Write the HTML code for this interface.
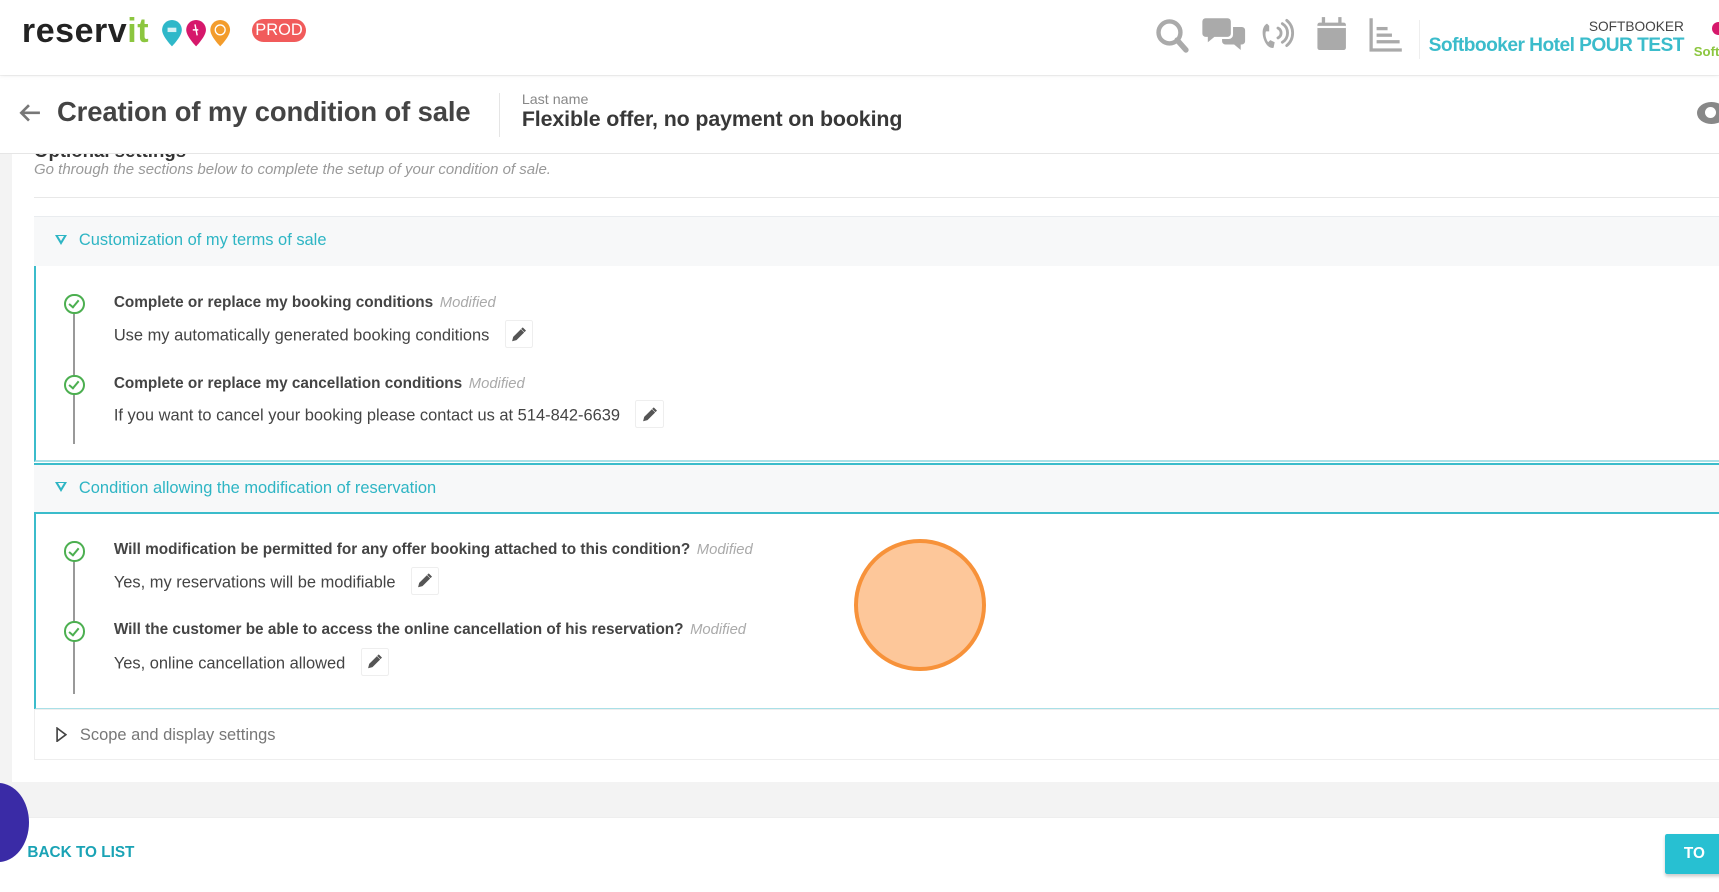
<!DOCTYPE html>
<html><head><meta charset="utf-8"><style>
html,body{margin:0;padding:0;overflow:hidden;background:#f3f3f3}
body{width:1719px;height:892px}
#w{zoom:1.0963;width:1568px;height:814px;position:relative;overflow:hidden;font-family:"Liberation Sans",sans-serif;background:#f3f3f3}
.a{position:absolute}
.hdr{left:0;top:0;width:1568px;height:68px;background:#fff;box-shadow:0 1px 4px rgba(0,0,0,.08);z-index:3}
.sub{left:0;top:69px;width:1568px;height:71px;background:#fff;border-bottom:1px solid #e6e6e6;z-index:2}
.card{left:11px;top:120px;width:1570px;height:593px;background:#fff}
.sech{left:31px;width:1540px;height:45px;background:#f7f8f9;border-top:1px solid #e9ecef}
.sech span{position:absolute;left:41px;top:13px;font-size:15px;color:#2eb5c4}
.tri{position:absolute;left:19px;top:16px;width:0;height:0;border-left:6px solid transparent;border-right:6px solid transparent;border-top:10px solid #2eb5c4}
.tri:after{content:"";position:absolute;left:-3px;top:-8px;border-left:3px solid transparent;border-right:3px solid transparent;border-top:5px solid #f7f8f9}
.secb{left:31px;width:1540px;background:#fff;border-left:2px solid #3bbccb;border-bottom:2px solid #a9e0e7}
.chk{position:absolute;width:15px;height:15px;border:2px solid #4caf50;border-radius:50%;left:26px;background:#fff}
.chk:after{content:"";position:absolute;left:4px;top:2px;width:4px;height:7px;border:solid #4caf50;border-width:0 2px 2px 0;transform:rotate(40deg)}
.vl{position:absolute;left:34px;width:2px;background:#999}
.t{position:absolute;left:71px;font-size:14px;font-weight:bold;color:#444;white-space:nowrap}
.t i{font-weight:normal;color:#aaa;font-size:13.5px;margin-left:6px}
.d{position:absolute;left:71px;font-size:15px;color:#444;white-space:nowrap}
.pen{display:inline-block;vertical-align:middle;width:24px;height:24px;border:1px solid #eee;border-radius:2px;margin-left:14px;position:relative;top:-2px}
.pen svg{position:absolute;left:5px;top:5px}
</style></head><body><div id="w">
<div class="a hdr">
 <div class="a" style="left:20px;top:11px;font-size:31px;font-weight:bold;color:#232323;letter-spacing:0.5px">reserv<span style="color:#8cc63f">it</span></div>
 <svg class="a" style="left:147px;top:18px" width="66" height="26" viewBox="0 0 66 26">
  <path d="M10 0a9 9 0 0 1 9 9c0 6-9 15-9 15S1 15 1 9a9 9 0 0 1 9-9z" fill="#2fb8c9"/>
  <path d="M32 0a9 9 0 0 1 9 9c0 6-9 15-9 15S23 15 23 9a9 9 0 0 1 9-9z" fill="#d6186b"/>
  <path d="M54 0a9 9 0 0 1 9 9c0 6-9 15-9 15S45 15 45 9a9 9 0 0 1 9-9z" fill="#f39c2c"/>
  <rect x="6" y="7" width="8" height="4" fill="#fff" opacity=".8"/><circle cx="54" cy="9" r="4.5" fill="none" stroke="#fff" stroke-width="1.2"/><path d="M31 4l2 10M29 9h5" stroke="#fff" stroke-width="1.3"/>
 </svg>
 <div class="a" style="left:230px;top:17px;width:49px;height:21px;border-radius:11px;background:#f15b5b;color:#fff;font-size:15px;text-align:center;line-height:21px">PROD</div>
 <svg class="a" style="left:1052px;top:15px" width="232" height="36" viewBox="0 0 232 36" fill="#aaa">
  <circle cx="15" cy="15" r="10" fill="none" stroke="#aaa" stroke-width="4"/><path d="M22 22l8 9" stroke="#aaa" stroke-width="5" stroke-linecap="round"/>
  <path d="M48 2h20a3 3 0 0 1 3 3v11a3 3 0 0 1-3 3h-12l-6 5v-5h-2a3 3 0 0 1-3-3V5a3 3 0 0 1 3-3z"/><path d="M73 10h8a3 3 0 0 1 3 3v10a3 3 0 0 1-3 3h-1v5l-6-5h-8a3 3 0 0 1-3-3v-2h6a4 4 0 0 0 4-4z"/>
  <path d="M104 7c-4 2-5 8-3 14s6 9 9 8l1-5-4-2-2 2c-2-3-3-7-2-10l3 0 0-5z"/><path d="M114 11a5 5 0 0 1 0 9M118 7a10 10 0 0 1 0 17M122 4a15 15 0 0 1 0 23" fill="none" stroke="#aaa" stroke-width="2.6" stroke-linecap="round"/>
  <rect x="150" y="6" width="26" height="25" rx="2"/><rect x="154" y="1" width="3" height="7"/><rect x="169" y="1" width="3" height="7"/><rect x="150" y="9" width="26" height="2" fill="#fff"/>
  <path d="M199 2v29h28" fill="none" stroke="#aaa" stroke-width="3"/><rect x="204" y="10" width="10" height="3"/><rect x="204" y="16" width="14" height="3"/><rect x="204" y="22" width="21" height="3"/>
 </svg>
 <div class="a" style="left:1294px;top:18px;width:1px;height:36px;background:#eee"></div>
 <div class="a" style="left:1336px;top:17px;width:200px;text-align:right;font-size:12.5px;color:#444">SOFTBOOKER</div>
 <div class="a" style="left:1290px;top:32px;width:246px;text-align:right;font-size:17.5px;font-weight:bold;color:#3bbccb;white-space:nowrap;letter-spacing:-0.5px">Softbooker Hotel POUR TEST</div>
 <div class="a" style="left:1545px;top:40px;font-size:12px;font-weight:bold;color:#8cc63f">Soft</div>
 <div class="a" style="left:1562px;top:20px;width:12px;height:12px;border-radius:50%;background:#d6186b"></div>
</div>
<div class="a card">
 <div class="a" style="left:20px;top:8px;font-size:17px;font-weight:bold;color:#333">Optional settings</div>
 <div class="a" style="left:20px;top:27px;font-size:13.7px;font-style:italic;color:#999">Go through the sections below to complete the setup of your condition of sale.</div>
 <div class="a" style="left:20px;top:60px;width:1560px;height:1px;background:#e8e8e8"></div>
</div>
<div class="a sub">
 <svg class="a" style="left:16px;top:25px" width="22" height="18" viewBox="0 0 22 18"><path d="M20 9H3M10 2L3 9l7 7" fill="none" stroke="#777" stroke-width="2.4"/></svg>
 <div class="a" style="left:52px;top:19px;font-size:25px;font-weight:bold;color:#444;white-space:nowrap;letter-spacing:-0.1px">Creation of my condition of sale</div>
 <div class="a" style="left:455px;top:16px;width:1px;height:40px;background:#e5e5e5"></div>
 <div class="a" style="left:476px;top:15px;font-size:13px;color:#888">Last name</div>
 <div class="a" style="left:476px;top:29px;font-size:19.5px;font-weight:bold;color:#383838;white-space:nowrap;letter-spacing:-0.1px">Flexible offer, no payment on booking</div>
 <div class="a" style="left:1548px;top:24px;width:26px;height:20px;border-radius:50%;background:#888"></div>
 <div class="a" style="left:1555px;top:29px;width:10px;height:10px;border-radius:50%;background:#fff"></div>
</div>
<div class="a sech" style="top:197px"><div class="tri"></div><span>Customization of my terms of sale</span></div>
<div class="a secb" style="top:243px;height:177px">
 <div class="vl" style="top:40px;height:122px"></div>
 <div class="chk" style="top:25px"></div>
 <div class="t" style="top:25px">Complete or replace my booking conditions<i>Modified</i></div>
 <div class="d" style="top:51px">Use my automatically generated booking conditions<span class="pen"><svg width="14" height="14" viewBox="0 0 14 14"><path d="M1 13l1-4 7-7 3 3-7 7z" fill="#555"/><path d="M10 1l3 3" stroke="#555" stroke-width="2"/></svg></span></div>
 <div class="chk" style="top:99px"></div>
 <div class="t" style="top:99px">Complete or replace my cancellation conditions<i>Modified</i></div>
 <div class="d" style="top:124px">If you want to cancel your booking please contact us at 514-842-6639<span class="pen"><svg width="14" height="14" viewBox="0 0 14 14"><path d="M1 13l1-4 7-7 3 3-7 7z" fill="#555"/><path d="M10 1l3 3" stroke="#555" stroke-width="2"/></svg></span></div>
</div>
<div class="a sech" style="top:422px;border-top:2px solid #3bbccb"><div class="tri"></div><span>Condition allowing the modification of reservation</span></div>
<div class="a secb" style="top:467px;height:177px;border-top:2px solid #3bbccb">
 <div class="vl" style="top:38px;height:126px"></div>
 <div class="chk" style="top:25px"></div>
 <div class="t" style="top:25px">Will modification be permitted for any offer booking attached to this condition?<i>Modified</i></div>
 <div class="d" style="top:50px">Yes, my reservations will be modifiable<span class="pen"><svg width="14" height="14" viewBox="0 0 14 14"><path d="M1 13l1-4 7-7 3 3-7 7z" fill="#555"/><path d="M10 1l3 3" stroke="#555" stroke-width="2"/></svg></span></div>
 <div class="chk" style="top:98px"></div>
 <div class="t" style="top:98px">Will the customer be able to access the online cancellation of his reservation?<i>Modified</i></div>
 <div class="d" style="top:124px">Yes, online cancellation allowed<span class="pen"><svg width="14" height="14" viewBox="0 0 14 14"><path d="M1 13l1-4 7-7 3 3-7 7z" fill="#555"/><path d="M10 1l3 3" stroke="#555" stroke-width="2"/></svg></span></div>
</div>
<div class="a" style="left:31px;top:647px;width:1540px;height:44px;background:#fff;border:1px solid #eee">
 <svg class="a" style="left:19px;top:15px" width="10" height="14" viewBox="0 0 10 14"><path d="M1 1l8 6-8 6z" fill="none" stroke="#444" stroke-width="1.5"/></svg>
 <div class="a" style="left:41px;top:14px;font-size:15px;color:#777">Scope and display settings</div>
</div>
<div class="a" style="left:0;top:745px;width:1568px;height:69px;background:#fff;border-top:1px solid #eee"></div>
<div class="a" style="left:25px;top:770px;font-size:14px;font-weight:bold;color:#1aa3b5">BACK TO LIST</div>
<div class="a" style="left:1519px;top:761px;width:60px;height:36px;background:#27c0d2;border-radius:2px;box-shadow:0 2px 3px rgba(0,0,0,.2);color:#fff;font-weight:bold;font-size:14px;line-height:36px;padding-left:17px">TO SAVE</div>
<div class="a" style="left:-30px;top:714px;width:56px;height:72px;border-radius:50%;background:#3a2ba6"></div>
<div class="a" style="left:779px;top:492px;width:113px;height:113px;border-radius:50%;background:#fdc79a;border:4px solid #f7923a"></div>
</div></body></html>
